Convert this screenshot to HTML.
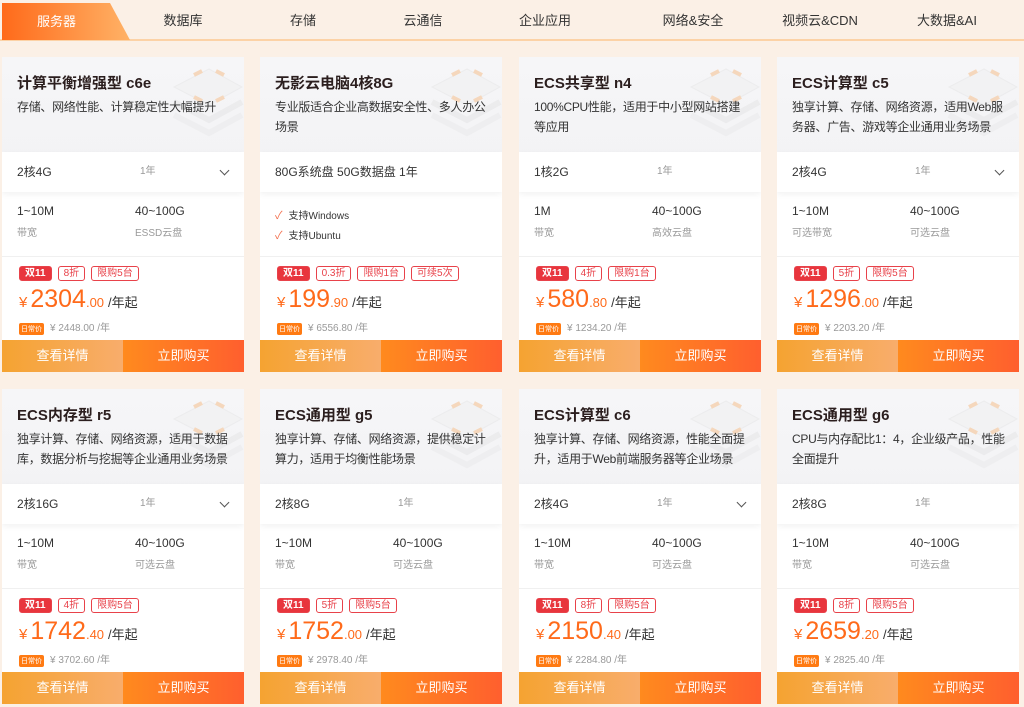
<!DOCTYPE html>
<html><head><meta charset="utf-8"><style>
*{margin:0;padding:0;box-sizing:border-box}
body{width:1024px;height:707px;background:#fbf0e6;font-family:"Liberation Sans","Noto Sans CJK SC",sans-serif;position:relative;overflow:hidden;color:#333}
.tabs{position:absolute;left:0;top:0;width:1024px;height:41px;border-bottom:2px solid #fcd2a6}
.tab{position:absolute;top:0;height:40px;line-height:42px;font-size:13px;color:#333;transform:translateX(-50%);white-space:nowrap}
.act{position:absolute;left:2px;top:3px;width:128px;height:37px;background:linear-gradient(90deg,#ff6a1a,#ffb266);clip-path:polygon(0 0,108px 0,128px 100%,0 100%);color:#fff;font-size:13px;line-height:38px;padding-left:35px}
.card{position:absolute;width:242px;height:315px;background:#fff;overflow:hidden}
.hd{position:absolute;left:0;top:0;width:242px;height:95px;background:linear-gradient(180deg,#f6f6f8,#f3f3f5)}
.deco{position:absolute;right:0;top:0;width:90px;height:80px}
.t{position:absolute;left:15px;top:15px;font-size:15px;font-weight:bold;color:#2b1e1e}
.d{position:absolute;left:15px;top:40px;width:216px;font-size:12px;line-height:20px;color:#333;letter-spacing:-0.3px}
.sel{position:absolute;left:0;top:95px;width:242px;height:40px;background:#fff;box-shadow:0 2px 6px rgba(0,0,0,.06);font-size:12px;line-height:40px;padding-left:15px;color:#333}
.sel .y{position:absolute;left:138px;font-size:10px;color:#999}
.sel .ar{position:absolute;right:16px;top:15px;width:7px;height:7px;border-right:1.3px solid #555;border-bottom:1.3px solid #555;transform:rotate(45deg)}
.sp{position:absolute;top:147px;font-size:12px;color:#333}
.sp small{display:block;font-size:10px;color:#999;margin-top:6px}
.ck{position:absolute;left:15px;font-size:10px;color:#333}
.ck b{color:#f2704f;font-weight:normal;margin-right:6px;font-size:11px}
.line{position:absolute;left:0;top:199px;width:242px;border-top:1px solid #f0f0f0}
.tags{position:absolute;left:17px;top:209px;display:flex;gap:6px}
.tag{height:15px;line-height:13px;font-size:10px;padding:0 5px;border:1px solid #e8424a;color:#e8424a;border-radius:3px}
.tag.r{background:#e8353d;color:#fff;font-weight:bold}
.pr{position:absolute;left:17px;top:228px;color:#ff6a1a;white-space:nowrap}
.pr .c{font-size:15px}.pr .n{font-size:25px;margin-left:3px}.pr .f{font-size:13px}.pr .u{font-size:13px;color:#333;margin-left:4px}
.dp{position:absolute;left:17px;top:262px;font-size:10px;color:#999;white-space:nowrap}
.dp i{font-style:normal;display:inline-block;background:#ff7a12;color:#fff;font-size:7px;padding:1px 2px;border-radius:2px;margin-right:6px}
.b1,.b2{position:absolute;top:283px;height:32px;width:121px;color:#fff;font-size:13px;line-height:32px;text-align:center}
.b1{left:0;background:linear-gradient(90deg,#f5a331,#f8ad6c)}
.b2{left:121px;background:linear-gradient(90deg,#ff8a1e,#ff5f2e)}
</style></head><body>
<div class="tabs">
<div class="act">服务器</div>
<div class="tab" style="left:183px">数据库</div>
<div class="tab" style="left:303px">存储</div>
<div class="tab" style="left:423px">云通信</div>
<div class="tab" style="left:545px">企业应用</div>
<div class="tab" style="left:693px">网络&amp;安全</div>
<div class="tab" style="left:820px">视频云&amp;CDN</div>
<div class="tab" style="left:947px">大数据&amp;AI</div>
</div>

<div class="card" style="left:2px;top:57px"><div class="hd"></div><svg class="deco" viewBox="0 0 90 80"><g opacity=".35"><path d="M20 30 L55 12 L88 30 L55 48Z" fill="#eee" stroke="#ddd"/><path d="M20 45 L55 63 L88 45" fill="none" stroke="#ddd" stroke-width="6"/><path d="M20 58 L55 76 L88 58" fill="none" stroke="#e5e5e5" stroke-width="6"/><path d="M40 18 L48 14 M62 14 L70 18 M40 40 L48 44 M62 44 L70 40" stroke="#f5a050" stroke-width="4"/></g></svg><div class="t">计算平衡增强型 c6e</div><div class="d">存储、网络性能、计算稳定性大幅提升</div><div class="sel">2核4G<span class="y">1年</span><span class="ar"></span></div><div class="sp" style="left:15px">1~10M<small>带宽</small></div><div class="sp" style="left:133px">40~100G<small>ESSD云盘</small></div><div class="line"></div><div class="tags"><span class="tag r">双11</span><span class="tag">8折</span><span class="tag">限购5台</span></div><div class="pr"><span class="c">¥</span><span class="n">2304</span><span class="f">.00</span><span class="u">/年起</span></div><div class="dp"><i>日常价</i>¥ 2448.00 /年</div><div class="b1">查看详情</div><div class="b2">立即购买</div></div>

<div class="card" style="left:260px;top:57px"><div class="hd"></div><svg class="deco" viewBox="0 0 90 80"><g opacity=".35"><path d="M20 30 L55 12 L88 30 L55 48Z" fill="#eee" stroke="#ddd"/><path d="M20 45 L55 63 L88 45" fill="none" stroke="#ddd" stroke-width="6"/><path d="M20 58 L55 76 L88 58" fill="none" stroke="#e5e5e5" stroke-width="6"/><path d="M40 18 L48 14 M62 14 L70 18 M40 40 L48 44 M62 44 L70 40" stroke="#f5a050" stroke-width="4"/></g></svg><div class="t">无影云电脑4核8G</div><div class="d">专业版适合企业高数据安全性、多人办公场景</div><div class="sel">80G系统盘 50G数据盘 1年</div><div class="ck" style="top:150px"><b>✓</b>支持Windows</div><div class="ck" style="top:170px"><b>✓</b>支持Ubuntu</div><div class="line"></div><div class="tags"><span class="tag r">双11</span><span class="tag">0.3折</span><span class="tag">限购1台</span><span class="tag">可续5次</span></div><div class="pr"><span class="c">¥</span><span class="n">199</span><span class="f">.90</span><span class="u">/年起</span></div><div class="dp"><i>日常价</i>¥ 6556.80 /年</div><div class="b1">查看详情</div><div class="b2">立即购买</div></div>

<div class="card" style="left:519px;top:57px"><div class="hd"></div><svg class="deco" viewBox="0 0 90 80"><g opacity=".35"><path d="M20 30 L55 12 L88 30 L55 48Z" fill="#eee" stroke="#ddd"/><path d="M20 45 L55 63 L88 45" fill="none" stroke="#ddd" stroke-width="6"/><path d="M20 58 L55 76 L88 58" fill="none" stroke="#e5e5e5" stroke-width="6"/><path d="M40 18 L48 14 M62 14 L70 18 M40 40 L48 44 M62 44 L70 40" stroke="#f5a050" stroke-width="4"/></g></svg><div class="t">ECS共享型 n4</div><div class="d">100%CPU性能，适用于中小型网站搭建等应用</div><div class="sel">1核2G<span class="y">1年</span></div><div class="sp" style="left:15px">1M<small>带宽</small></div><div class="sp" style="left:133px">40~100G<small>高效云盘</small></div><div class="line"></div><div class="tags"><span class="tag r">双11</span><span class="tag">4折</span><span class="tag">限购1台</span></div><div class="pr"><span class="c">¥</span><span class="n">580</span><span class="f">.80</span><span class="u">/年起</span></div><div class="dp"><i>日常价</i>¥ 1234.20 /年</div><div class="b1">查看详情</div><div class="b2">立即购买</div></div>

<div class="card" style="left:777px;top:57px"><div class="hd"></div><svg class="deco" viewBox="0 0 90 80"><g opacity=".35"><path d="M20 30 L55 12 L88 30 L55 48Z" fill="#eee" stroke="#ddd"/><path d="M20 45 L55 63 L88 45" fill="none" stroke="#ddd" stroke-width="6"/><path d="M20 58 L55 76 L88 58" fill="none" stroke="#e5e5e5" stroke-width="6"/><path d="M40 18 L48 14 M62 14 L70 18 M40 40 L48 44 M62 44 L70 40" stroke="#f5a050" stroke-width="4"/></g></svg><div class="t">ECS计算型 c5</div><div class="d">独享计算、存储、网络资源，适用Web服务器、广告、游戏等企业通用业务场景</div><div class="sel">2核4G<span class="y">1年</span><span class="ar"></span></div><div class="sp" style="left:15px">1~10M<small>可选带宽</small></div><div class="sp" style="left:133px">40~100G<small>可选云盘</small></div><div class="line"></div><div class="tags"><span class="tag r">双11</span><span class="tag">5折</span><span class="tag">限购5台</span></div><div class="pr"><span class="c">¥</span><span class="n">1296</span><span class="f">.00</span><span class="u">/年起</span></div><div class="dp"><i>日常价</i>¥ 2203.20 /年</div><div class="b1">查看详情</div><div class="b2">立即购买</div></div>

<div class="card" style="left:2px;top:389px"><div class="hd"></div><svg class="deco" viewBox="0 0 90 80"><g opacity=".35"><path d="M20 30 L55 12 L88 30 L55 48Z" fill="#eee" stroke="#ddd"/><path d="M20 45 L55 63 L88 45" fill="none" stroke="#ddd" stroke-width="6"/><path d="M20 58 L55 76 L88 58" fill="none" stroke="#e5e5e5" stroke-width="6"/><path d="M40 18 L48 14 M62 14 L70 18 M40 40 L48 44 M62 44 L70 40" stroke="#f5a050" stroke-width="4"/></g></svg><div class="t">ECS内存型 r5</div><div class="d">独享计算、存储、网络资源，适用于数据库，数据分析与挖掘等企业通用业务场景</div><div class="sel">2核16G<span class="y">1年</span><span class="ar"></span></div><div class="sp" style="left:15px">1~10M<small>带宽</small></div><div class="sp" style="left:133px">40~100G<small>可选云盘</small></div><div class="line"></div><div class="tags"><span class="tag r">双11</span><span class="tag">4折</span><span class="tag">限购5台</span></div><div class="pr"><span class="c">¥</span><span class="n">1742</span><span class="f">.40</span><span class="u">/年起</span></div><div class="dp"><i>日常价</i>¥ 3702.60 /年</div><div class="b1">查看详情</div><div class="b2">立即购买</div></div>

<div class="card" style="left:260px;top:389px"><div class="hd"></div><svg class="deco" viewBox="0 0 90 80"><g opacity=".35"><path d="M20 30 L55 12 L88 30 L55 48Z" fill="#eee" stroke="#ddd"/><path d="M20 45 L55 63 L88 45" fill="none" stroke="#ddd" stroke-width="6"/><path d="M20 58 L55 76 L88 58" fill="none" stroke="#e5e5e5" stroke-width="6"/><path d="M40 18 L48 14 M62 14 L70 18 M40 40 L48 44 M62 44 L70 40" stroke="#f5a050" stroke-width="4"/></g></svg><div class="t">ECS通用型 g5</div><div class="d">独享计算、存储、网络资源，提供稳定计算力，适用于均衡性能场景</div><div class="sel">2核8G<span class="y">1年</span></div><div class="sp" style="left:15px">1~10M<small>带宽</small></div><div class="sp" style="left:133px">40~100G<small>可选云盘</small></div><div class="line"></div><div class="tags"><span class="tag r">双11</span><span class="tag">5折</span><span class="tag">限购5台</span></div><div class="pr"><span class="c">¥</span><span class="n">1752</span><span class="f">.00</span><span class="u">/年起</span></div><div class="dp"><i>日常价</i>¥ 2978.40 /年</div><div class="b1">查看详情</div><div class="b2">立即购买</div></div>

<div class="card" style="left:519px;top:389px"><div class="hd"></div><svg class="deco" viewBox="0 0 90 80"><g opacity=".35"><path d="M20 30 L55 12 L88 30 L55 48Z" fill="#eee" stroke="#ddd"/><path d="M20 45 L55 63 L88 45" fill="none" stroke="#ddd" stroke-width="6"/><path d="M20 58 L55 76 L88 58" fill="none" stroke="#e5e5e5" stroke-width="6"/><path d="M40 18 L48 14 M62 14 L70 18 M40 40 L48 44 M62 44 L70 40" stroke="#f5a050" stroke-width="4"/></g></svg><div class="t">ECS计算型 c6</div><div class="d">独享计算、存储、网络资源，性能全面提升，适用于Web前端服务器等企业场景</div><div class="sel">2核4G<span class="y">1年</span><span class="ar"></span></div><div class="sp" style="left:15px">1~10M<small>带宽</small></div><div class="sp" style="left:133px">40~100G<small>可选云盘</small></div><div class="line"></div><div class="tags"><span class="tag r">双11</span><span class="tag">8折</span><span class="tag">限购5台</span></div><div class="pr"><span class="c">¥</span><span class="n">2150</span><span class="f">.40</span><span class="u">/年起</span></div><div class="dp"><i>日常价</i>¥ 2284.80 /年</div><div class="b1">查看详情</div><div class="b2">立即购买</div></div>

<div class="card" style="left:777px;top:389px"><div class="hd"></div><svg class="deco" viewBox="0 0 90 80"><g opacity=".35"><path d="M20 30 L55 12 L88 30 L55 48Z" fill="#eee" stroke="#ddd"/><path d="M20 45 L55 63 L88 45" fill="none" stroke="#ddd" stroke-width="6"/><path d="M20 58 L55 76 L88 58" fill="none" stroke="#e5e5e5" stroke-width="6"/><path d="M40 18 L48 14 M62 14 L70 18 M40 40 L48 44 M62 44 L70 40" stroke="#f5a050" stroke-width="4"/></g></svg><div class="t">ECS通用型 g6</div><div class="d">CPU与内存配比1：4，企业级产品，性能全面提升</div><div class="sel">2核8G<span class="y">1年</span></div><div class="sp" style="left:15px">1~10M<small>带宽</small></div><div class="sp" style="left:133px">40~100G<small>可选云盘</small></div><div class="line"></div><div class="tags"><span class="tag r">双11</span><span class="tag">8折</span><span class="tag">限购5台</span></div><div class="pr"><span class="c">¥</span><span class="n">2659</span><span class="f">.20</span><span class="u">/年起</span></div><div class="dp"><i>日常价</i>¥ 2825.40 /年</div><div class="b1">查看详情</div><div class="b2">立即购买</div></div>
</body></html>
